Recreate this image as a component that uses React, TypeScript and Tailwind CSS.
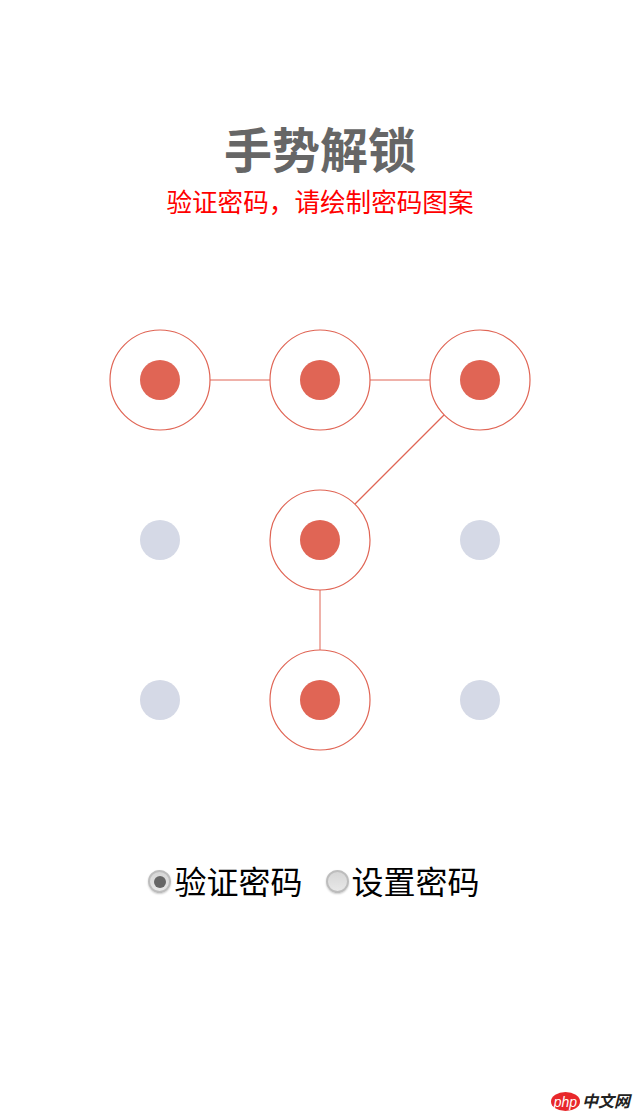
import React from 'react';

const cjk = "font-['Liberation_Sans','Noto_Sans_CJK_SC',sans-serif]";

// row by row, true = part of the drawn pattern
const nodes = [true, true, true, false, true, false, false, true, false];

const Node: React.FC<{ active: boolean }> = ({ active }) => (
  <div className="relative flex h-[100px] w-[100px] items-center justify-center">
    {active && (
      <svg className="absolute inset-0 h-[100px] w-[100px] overflow-visible" viewBox="0 0 100 100" fill="none">
        <circle cx="50" cy="50" r="50" stroke="#e06555" strokeWidth="1.2" />
      </svg>
    )}
    <div className={`h-10 w-10 rounded-full ${active ? 'bg-[#e06555]' : 'bg-[#d5d9e6]'}`} />
  </div>
);

const Radio: React.FC<{ checked?: boolean; label: string }> = ({ checked, label }) => (
  <label className="flex items-center">
    <span className="mb-[3px] flex h-[23px] w-[23px] items-center justify-center rounded-full border-2 border-[#bdbdbd] bg-gradient-to-b from-[#d6d6d6] to-[#e8e8e8] shadow-[0_1px_2px_rgba(0,0,0,0.2)]">
      {checked && <span className="h-[12px] w-[12px] rounded-full bg-[#666666]" />}
    </span>
    <span className="ml-[3px] text-[32px] leading-[44px] text-black">{label}</span>
  </label>
);

const App: React.FC = () => {
  return (
    <div className={`relative flex h-[1120px] w-[640px] flex-col items-center overflow-hidden bg-white ${cjk}`}>
      <h1 className="mt-[124px] text-[48px] font-bold leading-[56px] text-[#666666]">手势解锁</h1>
      <p className="mt-[3px] text-[25.6px] leading-[40px] text-[#ff0000]">验证密码，请绘制密码图案</p>

      <div className="relative mt-[107px] grid grid-cols-[100px_100px_100px] gap-[60px]">
        <svg className="absolute left-0 top-0 h-[420px] w-[420px]" viewBox="0 0 420 420" fill="none">
          <path d="M100 50H160" stroke="#e06555" />
          <path d="M260 50H320" stroke="#e06555" />
          <path d="M334 85L245 174" stroke="#e06555" strokeWidth="1.2" />
          <path d="M210 260V320" stroke="#e06555" />
        </svg>
        {nodes.map((active, i) => (
          <Node key={i} active={active} />
        ))}
      </div>

      <div className="mr-[12px] mt-[111px] flex items-center gap-[23px]">
        <Radio checked label="验证密码" />
        <Radio label="设置密码" />
      </div>

      {/* watermark */}
      <div className="absolute bottom-[9px] right-[10px] flex items-center">
        <span className="flex h-[19px] w-[29px] items-center justify-center rounded-[50%] bg-[#e8282b] font-['Liberation_Sans',sans-serif] text-[14px] italic leading-none text-white">
          php
        </span>
        <span className="ml-[2px] text-[16px] font-bold italic leading-none text-[#222222]">中文网</span>
      </div>
    </div>
  );
};

export default App;
